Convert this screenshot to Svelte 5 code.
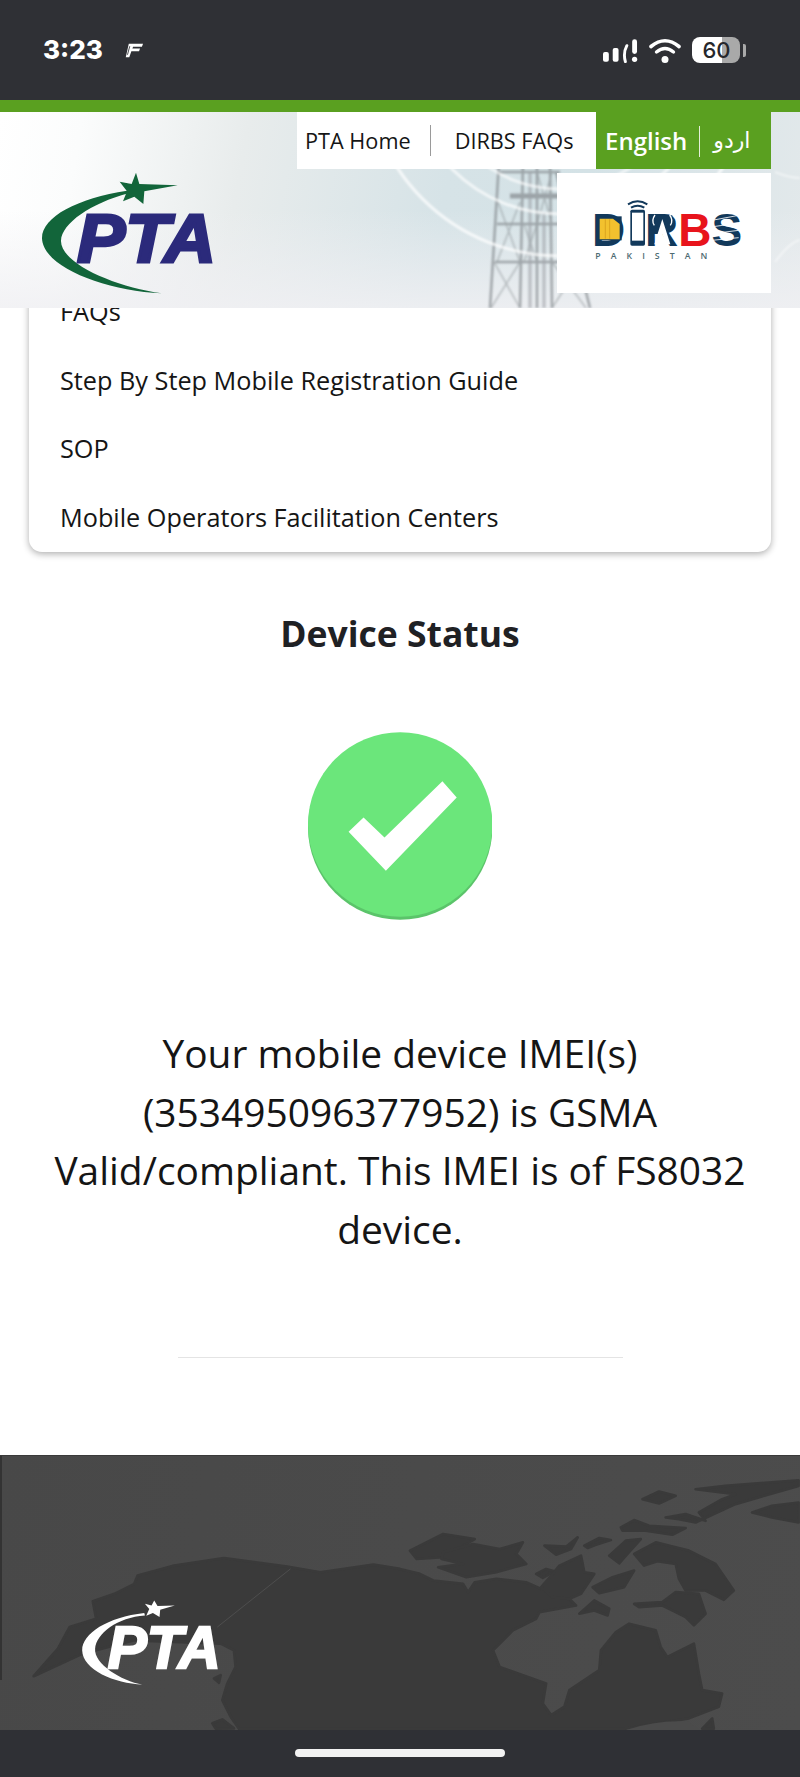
<script>
  const menu = ['FAQs', 'Step By Step Mobile Registration Guide', 'SOP', 'Mobile Operators Facilitation Centers'];
  const message = ['Your mobile device IMEI(s)', '(353495096377952) is GSMA', 'Valid/compliant. This IMEI is of FS8032', 'device.'];
</script>

<div class="page">
  <div class="status">
    <div class="status-left">
      <span class="time">3:23</span>
      <svg class="focus" viewBox="0 0 20 15" aria-hidden="true">
        <path d="M4 .5h15l-1.200 3H8.500L7.800 5.500h8l-1 2.700H6.700L4.500 14.500H.8z" fill="#fff"/>
        <path d="M5 3 2.600 12" stroke="#2f3035" stroke-width=".9" fill="none"/>
      </svg>
    </div>
    <div class="status-right">
      <svg class="signal" viewBox="0 0 36 24" aria-hidden="true">
        <rect x="0" y="13" width="6" height="10" rx="2" fill="#fff"/>
        <rect x="10" y="9" width="6" height="14" rx="2" fill="#fff"/>
        <path d="M24.500 6.500Q20.500 14 23 23" stroke="#fff" stroke-width="3" fill="none" stroke-linecap="round"/>
        <rect x="30" y="0" width="5" height="15" rx="2.500" fill="#fff"/>
        <circle cx="32.500" cy="20.500" r="2.700" fill="#fff"/>
      </svg>
      <svg class="wifi" viewBox="0 0 32 25" aria-hidden="true">
        <path d="M2 8.500Q16 -3 30 8.500" stroke="#fff" stroke-width="3.600" fill="none" stroke-linecap="round"/>
        <path d="M7.500 14Q16 7 24.500 14" stroke="#fff" stroke-width="3.400" fill="none" stroke-linecap="round"/>
        <circle cx="16" cy="21.500" r="3.500" fill="#fff"/>
      </svg>
      <div class="battery">
        <div class="cell"><span>60</span></div>
        <div class="nub"></div>
      </div>
    </div>
  </div>
  <div class="accent"></div>

  <header class="header">
    <svg class="art" viewBox="0 0 800 196" preserveAspectRatio="none" aria-hidden="true">
      <g fill="none" stroke="#858b8f" stroke-width="2.500" opacity=".72">
        <path d="M499 50 490 196M523 50 520 196M537 50 537 196M550 50 552 196M556 60 590 196"/>
        <path d="M510 83H560M510 85H560" stroke-width="3"/>
        <path d="M497 60H560M497 112H565M495 150H575"/>
        <path d="M498 90 520 150M520 90 497 150M494 150 520 196M520 150 491 196M552 150 586 196M582 150 552 196M537 60 552 112M552 60 537 112M524 112 537 150M537 112 524 150" stroke-width="1.500" opacity=".7"/>
        <path d="M530 60V196M544 100V196" stroke-width="3.500" opacity=".6"/>
      </g>
      <g fill="none" stroke="#fff">
        <circle cx="560" cy="-50" r="127" stroke-width="3" opacity=".65"/>
        <circle cx="560" cy="-50" r="152" stroke-width="3" opacity=".7"/>
        <circle cx="560" cy="-50" r="194" stroke-width="3" opacity=".75"/>
      </g>
      <path d="M775 150Q790 130 800 128M775 60Q790 66 800 66" fill="none" stroke="#fff" stroke-width="2" opacity=".5"/>
    </svg>

    <svg class="pta" viewBox="0 0 178 125" aria-label="PTA">
      <g transform="scale(.33333) translate(-120 -510)" fill="#12653a">
        <path d="M378 572C230 595 122 650 123 715C125 800 310 872 482 880C340 860 178 790 180 722C182 670 270 610 382 580z"/>
        <path d="M405 518 415 552 530 556 430 574 427 612 400 590 366 604 378 574 356 545 392 552z"/>
      </g>
      <text x="36" y="92.300" class="pta-word" fill="#2b2a7b" textLength="139" lengthAdjust="spacingAndGlyphs">PTA</text>
    </svg>

    <div class="header-right">
      <div class="topnav">
        <nav class="links">
          <span>PTA Home</span>
          <i></i>
          <span>DIRBS FAQs</span>
        </nav>
        <div class="lang">
          <span class="en">English</span>
          <i></i>
          <span class="ur" lang="ur" dir="rtl">اردو</span>
        </div>
      </div>
      <div class="dirbs">
        <svg viewBox="0 0 214 120" aria-label="DIRBS Pakistan">
          <text y="72.500" class="dl"><tspan x="35" fill="#12395b">D</tspan><tspan x="88" fill="#12395b">R</tspan><tspan x="121.200" fill="#e8141c">B</tspan><tspan x="154.400" fill="#12395b">S</tspan></text>
          <g transform="scale(.33333) translate(-470 -518)">
            <rect x="594" y="648" width="70" height="72" fill="#12395b"/>
            <path d="M598 655h40l20 16v46h-60z" fill="#f2c12e"/>
            <path d="M615 657v58M628 657v58" stroke="#d69f1c" stroke-width="2.500"/>
            <rect x="690" y="628" width="44" height="108" rx="5" fill="#12395b"/>
            <rect x="695" y="637" width="34" height="84" fill="#fff"/>
            <path d="M683 612Q712 594 741 612M692 622Q712 610 732 622" fill="none" stroke="#12395b" stroke-width="6"/>
            <rect x="752" y="645" width="64" height="46" fill="#12395b"/>
            <path d="M786 656 762 732h12l12-30 12 30h12z" fill="#fff"/>
            <path d="M762 675Q752 660 764 644M810 675Q820 660 808 644" fill="none" stroke="#fff" stroke-width="4"/>
            <path d="M935 660 1015 645M932 680 1015 668M935 700 1015 690M935 720 1015 712" stroke="#fff" stroke-width="2.500" fill="none"/>
          </g>
          <text x="38.300" y="86" class="pk" fill="#4d6b72" textLength="112">PAKISTAN</text>
        </svg>
      </div>
    </div>
  </header>

  <main>
    <ul class="menu">
      {#each menu as item}
        <li>{item}</li>
      {/each}
    </ul>

    <h1>Device Status</h1>

    <svg class="tick" viewBox="83 65 553 565" aria-label="Valid">
      <circle cx="360" cy="352" r="277" fill="#5bc46a"/>
      <circle cx="360" cy="343" r="277" fill="#6be67b"/>
      <path d="M205 365 250 322 313 382 487 213 530 262 317 482z" fill="#fff"/>
    </svg>

    <p class="message">
      {#each message as line}
        <span>{line}</span>
      {/each}
    </p>

    <hr />
  </main>

  <footer class="footer">
    <svg class="map" viewBox="0 0 800 275" aria-label="PTA">
      <g transform="scale(.33333) translate(0 -45)">
        <g fill="#3a3a3a" stroke="#3a3a3a" stroke-width="8" stroke-linejoin="round">
          <path d="M97 708 170 625 205 560 285 535 275 482 340 460 400 430 410 405 520 375 670 352 860 378 960 395 1120 372 1200 385 1260 400 1300 420 1390 430 1405 455 1425 425 1490 415 1580 425 1625 445 1705 470 1730 495 1620 515 1610 535 1540 570 1480 630 1500 680 1640 730 1630 790 1655 825 1695 800 1710 750 1800 690 1805 630 1850 575 1890 550 1970 570 1985 620 2005 650 2085 610 2100 700 2110 750 2170 760 2160 800 2070 835 1880 866 715 866 690 830 665 780 680 730 705 680 700 630 660 610 400 600 245 640z"/>
          <path d="M1230 330 1330 280 1425 295 1330 350 1250 355z"/>
          <path d="M1330 335 1420 310 1500 325 1570 305 1550 340 1580 370 1490 395 1400 410 1315 380 1390 370 1325 355z"/>
          <path d="M1635 315 1700 318 1735 290 1715 325 1670 342z"/>
          <path d="M1755 315 1800 292 1835 298 1790 312 1765 322z"/>
          <path d="M1610 400 1640 385 1665 392 1630 412z"/>
          <path d="M1680 375 1745 345 1755 395 1785 400 1745 460 1710 475 1660 470 1625 440 1660 400z"/>
          <path d="M1780 440 1840 410 1905 390 1875 440 1800 458z"/>
          <path d="M1740 520 1785 480 1830 505 1825 525 1785 510z"/>
          <path d="M1830 345 1880 300 1925 295 1885 340 1860 368z"/>
          <path d="M1905 340 1970 305 2030 320 2070 330 2150 370 2205 450 2175 478 2120 450 2060 450 2040 415 2030 370 1975 362 1935 375z"/>
          <path d="M1905 490 1990 485 2030 455 2100 460 2120 520 2085 555 2060 530 2030 515 1990 495 1920 500z"/>
          <path d="M1865 260 1905 238 1950 255 2060 262 2020 282 1940 270 1870 270z"/>
          <path d="M1930 175 1980 152 2030 165 1980 188z"/>
          <path d="M2000 230 2060 220 2120 240 2100 215 2170 175 2210 160 2090 145 2180 135 2400 118 2400 135 2210 190 2090 245 2040 235z"/>
          <path d="M2260 215 2320 195 2400 185 2400 245 2320 230z"/>
          <path d="M635 850 665 838 700 865 645 866z"/>
          <path d="M640 715 660 705 655 728z"/>
          <path d="M2110 866 2140 835 2145 866z"/>
        </g>
        <path d="M650 560 870 385" stroke="#4d4d4d" stroke-width="3" fill="none"/>
        <path d="M1880 870Q1980 838 2070 845L2100 870z" fill="#4b4b4b"/>
        <g fill="#fff">
          <path d="M430 518C320 530 243 580 243 630C245 690 340 730 425 733C360 722 278 670 282 625C285 580 350 530 432 525z"/>
          <path d="M460 480 470 497 522 495 478 508 476 530 456 518 436 526 445 506 432 490 452 495z"/>
        </g>
      </g>
      <text x="106.700" y="212.700" class="pta-word small" fill="#fff" textLength="113.300" lengthAdjust="spacingAndGlyphs">PTA</text>
    </svg>
  </footer>

  <div class="home"><div class="indicator"></div></div>
</div>

<style>
  :global(body) {
    margin: 0;
    background: #fff;
  }
  .page {
    width: 800px;
    height: 1777px;
    overflow: hidden;
    display: flex;
    flex-direction: column;
    font-family: "Open Sans", "Noto Sans", sans-serif;
    color: #151515;
  }

  .status {
    height: 100px;
    flex: none;
    box-sizing: border-box;
    padding: 0 54px 0 43px;
    background: #2f3035;
    display: flex;
    align-items: center;
    justify-content: space-between;
  }
  .status-left {
    display: flex;
    align-items: center;
    gap: 22px;
  }
  .time {
    font: 800 26px/1 Inter, sans-serif;
    color: #fff;
  }
  .focus {
    width: 19px;
    height: 15px;
    margin-top: 1px;
  }
  .status-right {
    display: flex;
    align-items: center;
  }
  .signal {
    width: 35px;
    height: 24px;
    margin-top: 1px;
  }
  .wifi {
    width: 32px;
    height: 25px;
    margin-left: 11px;
  }
  .battery {
    display: flex;
    align-items: center;
    gap: 3px;
    margin-left: 11px;
  }
  .cell {
    width: 48px;
    height: 26px;
    border-radius: 8px;
    background: linear-gradient(90deg, #fff 62%, #a9a9a9 62%);
    display: flex;
    align-items: center;
    justify-content: center;
  }
  .cell span {
    font: 500 22px/1 Inter, sans-serif;
    color: #26272b;
    margin-left: 1px;
  }
  .nub {
    width: 3px;
    height: 13px;
    border-radius: 0 2px 2px 0;
    background: #a9a9a9;
  }

  .accent {
    height: 12px;
    flex: none;
    background: #5aa020;
  }

  .header {
    height: 196px;
    flex: none;
    position: relative;
    z-index: 2;
    overflow: hidden;
    display: flex;
    justify-content: space-between;
    padding: 0 29px 0 41px;
    box-sizing: border-box;
    background:
      linear-gradient(180deg, rgba(244, 244, 246, 0) 50%, rgba(240, 240, 243, 0.85) 100%),
      linear-gradient(100deg, #fff 0%, #fbfcfc 10%, #e8ecec 30%, #d6e3e7 55%, #d4e2e6 72%, #e3e9eb 100%);
  }
  .art {
    position: absolute;
    inset: 0;
    width: 100%;
    height: 100%;
    filter: blur(0.9px);
  }
  .pta {
    position: relative;
    width: 178px;
    height: 125px;
    margin-top: 58px;
  }
  .pta-word {
    font: italic 700 69.300px "Liberation Sans", Arial, sans-serif;
    stroke: #2b2a7b;
    stroke-width: 3px;
  }
  .pta-word.small {
    font-size: 58.700px;
    stroke: #fff;
    stroke-width: 2.300px;
  }
  .header-right {
    position: relative;
    display: flex;
    flex-direction: column;
    align-items: flex-end;
  }
  .topnav {
    display: flex;
    height: 57px;
  }
  .links {
    width: 299px;
    box-sizing: border-box;
    background: #fff;
    display: flex;
    align-items: center;
    padding-left: 8px;
    font-size: 21.700px;
  }
  .links i {
    width: 1px;
    height: 31px;
    background: #9a9a9a;
    margin: 0 24px 0 19px;
  }
  .lang {
    width: 175px;
    box-sizing: border-box;
    background: #5aa020;
    color: #fff;
    display: flex;
    align-items: center;
    padding-left: 9px;
  }
  .en {
    font-size: 24px;
    font-weight: 600;
  }
  .lang i {
    width: 1px;
    height: 31px;
    background: #e4efd8;
    margin: 2px 13px 0 12px;
  }
  .ur {
    font: 22px "DejaVu Sans", sans-serif;
  }
  .dirbs {
    width: 214px;
    height: 120px;
    margin-top: 4px;
    background: #fff;
  }
  .dirbs svg {
    display: block;
    width: 100%;
    height: 100%;
  }
  .dl {
    font: 700 46px/1 "Liberation Sans", Arial, sans-serif;
  }
  .pk {
    font: 600 8.700px "Open Sans", sans-serif;
  }

  main {
    flex: 1;
    display: flex;
    flex-direction: column;
    align-items: center;
  }
  .menu {
    list-style: none;
    margin: -30px 29px 0;
    padding: 0;
    align-self: stretch;
    background: #fff;
    border-radius: 0 0 13px 13px;
    box-shadow: 0 2px 7px rgba(0, 0, 0, 0.32);
  }
  .menu li {
    height: 68.500px;
    display: flex;
    align-items: center;
    padding: 0 0 2px 31px;
    box-sizing: border-box;
    font-size: 25.250px;
  }
  h1 {
    margin: 58px 0 0;
    font-size: 35.500px;
    line-height: 46px;
    font-weight: 700;
    color: #1f2124;
  }
  .tick {
    width: 184px;
    height: 188px;
    margin-top: 76px;
    flex: none;
  }
  .message {
    margin: 104px 0 0;
    text-align: center;
    font-size: 38.900px;
    line-height: 58.600px;
  }
  .message span {
    display: block;
    white-space: nowrap;
  }
  hr {
    width: 445px;
    height: 1px;
    margin: 99px 0 0 1px;
    border: 0;
    background: #e4e4e4;
  }

  .footer {
    height: 275px;
    flex: none;
    position: relative;
    background: linear-gradient(100deg, #484848, #4c4c4c);
    border-top: 1px solid #3a3a3a;
    box-sizing: border-box;
  }
  .map {
    display: block;
    width: 100%;
    height: 100%;
  }
  .footer::before {
    content: "";
    position: absolute;
    left: 0;
    top: 0;
    width: 2px;
    height: 224px;
    background: #333;
  }
  .home {
    height: 47px;
    flex: none;
    background: #2f3035;
    display: flex;
    justify-content: center;
    padding-top: 19px;
    box-sizing: border-box;
  }
  .indicator {
    width: 210px;
    height: 8px;
    border-radius: 4px;
    background: #f2f2f2;
  }
</style>
